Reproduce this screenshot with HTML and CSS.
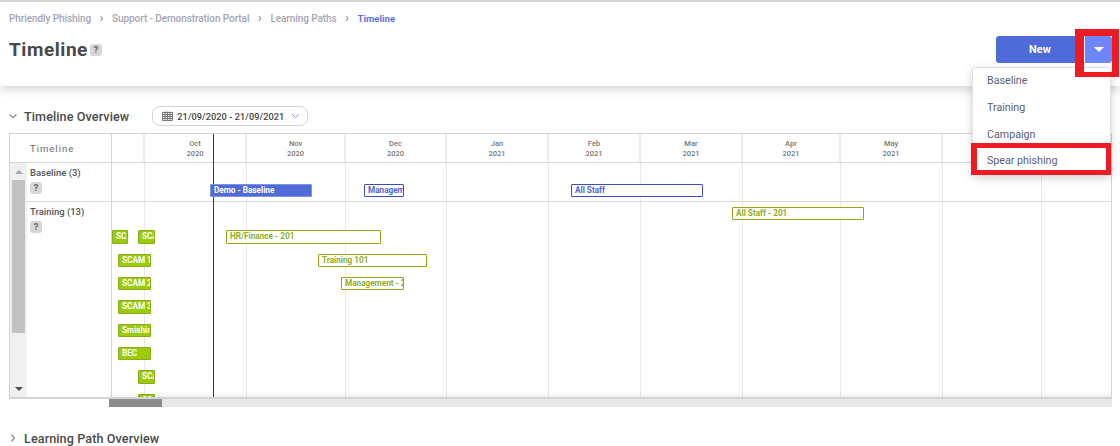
FILE: index.html
```html
<!DOCTYPE html>
<html lang="en">
<head>
<meta charset="utf-8">
<title>Timeline</title>
<link rel="stylesheet" href="styles.css">
</head>
<body>
<header class="top">
  <nav class="crumbs">
    <span>Phriendly Phishing</span><i class="sep">›</i>
    <span>Support - Demonstration Portal</span><i class="sep">›</i>
    <span>Learning Paths</span><i class="sep">›</i>
    <span class="current">Timeline</span>
  </nav>
  <div class="title-row">
    <h1>Timeline</h1><span class="help help-title">?</span>
    <div class="actions">
      <button class="btn-new">New</button>
      <button class="btn-caret" aria-label="More"><span class="caret"></span></button>
    </div>
  </div>
</header>

<section class="section-head first">
  <svg class="chev" width="10" height="10" viewBox="0 0 10 10"><path d="M1.5 3.5 5 6.5 8.5 3.5" fill="none" stroke="#8a8a8a" stroke-width="1.2"/></svg>
  <h2>Timeline Overview</h2>
  <div class="date-pill">
    <svg width="11" height="10" viewBox="0 0 11 10"><path d="M0.5 1.5h10v8h-10z M0.5 3.5h10 M0.5 5.5h10 M0.5 7.5h10 M3 .5v9 M5.5 .5v9 M8 .5v9" fill="none" stroke="#777" stroke-width="1"/></svg>
    <span>21/09/2020 - 21/09/2021</span>
    <svg class="pill-chev" width="9" height="6" viewBox="0 0 9 6"><path d="M1 1.2 4.5 4.5 8 1.2" fill="none" stroke="#8a97c8" stroke-width="1"/></svg>
  </div>
</section>

<div class="gantt">
  <div class="g-head">
    <div class="g-corner">Timeline</div>
    <div class="months head-months">
      <div class="m"></div>
      <div class="m"><b>Oct</b><b>2020</b></div>
      <div class="m"><b>Nov</b><b>2020</b></div>
      <div class="m"><b>Dec</b><b>2020</b></div>
      <div class="m"><b>Jan</b><b>2021</b></div>
      <div class="m"><b>Feb</b><b>2021</b></div>
      <div class="m"><b>Mar</b><b>2021</b></div>
      <div class="m"><b>Apr</b><b>2021</b></div>
      <div class="m"><b>May</b><b>2021</b></div>
      <div class="m"></div>
      <div class="m"></div>
      <div class="now now-head"></div>
    </div>
  </div>
  <div class="g-body">
    <div class="vscroll">
      <span class="arrow up"></span>
      <span class="thumb"></span>
      <span class="arrow down"></span>
    </div>
    <div class="labels">
      <div class="lab lab-base"><div class="lab-name">Baseline (3)</div><span class="help">?</span></div>
      <div class="lab"><div class="lab-name">Training (13)</div><span class="help">?</span></div>
    </div>
    <div class="canvas">
      <div class="months body-months">
        <div class="c"></div><div class="c"></div><div class="c"></div><div class="c"></div>
        <div class="c"></div><div class="c"></div><div class="c"></div><div class="c"></div>
        <div class="c"></div><div class="c"></div><div class="c"></div>
      </div>
      <div class="row-line"></div>
      <div class="now"></div>

      <div class="bar fill-blue" style="left:98px;top:21px;width:102px">Demo - Baseline</div>
      <div class="bar out-blue" style="left:252px;top:21px;width:40px">Management</div>
      <div class="bar out-blue" style="left:459px;top:21px;width:132px">All Staff</div>

      <div class="bar out-green" style="left:620px;top:44px;width:132px">All Staff - 201</div>
      <div class="bar fill-green tall" style="left:0;top:67px;width:16px">SCAM</div>
      <div class="bar fill-green tall" style="left:26px;top:67px;width:17px">SCAM</div>
      <div class="bar out-green tall" style="left:114px;top:67px;width:155px">HR/Finance - 201</div>
      <div class="bar fill-green" style="left:6px;top:91px;width:33px">SCAM 101</div>
      <div class="bar out-green" style="left:206px;top:91px;width:109px">Training 101</div>
      <div class="bar fill-green" style="left:6px;top:114px;width:33px">SCAM 201</div>
      <div class="bar out-green" style="left:229px;top:114px;width:63px">Management - 201</div>
      <div class="bar fill-green tall" style="left:6px;top:137px;width:33px">SCAM 301</div>
      <div class="bar fill-green" style="left:6px;top:161px;width:33px">Smishing</div>
      <div class="bar fill-green" style="left:6px;top:184px;width:33px">BEC</div>
      <div class="bar fill-green tall" style="left:26px;top:207px;width:17px">SCAM</div>
      <div class="bar fill-green tall" style="left:26px;top:231px;width:17px">SCAM</div>
      <div class="fade"></div>
    </div>
  </div>
</div>
<div class="hscroll"><span class="hthumb"></span></div>

<section class="section-head second">
  <svg class="chev" width="10" height="10" viewBox="0 0 10 10"><path d="M3.5 1.5 6.5 5 3.5 8.5" fill="none" stroke="#8a8a8a" stroke-width="1.2"/></svg>
  <h2>Learning Path Overview</h2>
</section>

<ul class="menu">
  <li>Baseline</li>
  <li>Training</li>
  <li>Campaign</li>
  <li>Spear phishing</li>
</ul>
<div class="mark mark-caret"></div>
<div class="mark mark-item"></div>
</body>
</html>
```
FILE: styles.css
```css
* { box-sizing: border-box; }
html, body { margin: 0; padding: 0; }
body {
  width: 1120px;
  height: 446px;
  overflow: hidden;
  position: relative;
  background: #fff;
  font-family: Roboto, "Liberation Sans", sans-serif;
  color: #444;
}

.top {
  height: 86px;
  border-top: 2px solid #d2d2d2;
  box-shadow: 0 3px 10px rgba(0, 0, 0, .18);
  padding: 10px 8px 0 9px;
  background: #fff;
}
.crumbs {
  display: flex;
  align-items: center;
  height: 12px;
  font-size: 10px;
  font-weight: 500;
  letter-spacing: -.08px;
  color: #a3a6b1;
}
.sep {
  width: 21px;
  text-align: center;
  font-style: normal;
  font-size: 12px;
  color: #888;
}
.current { color: #5a74e0; font-weight: 700; font-size: 9.6px; letter-spacing: 0; }
.title-row {
  display: flex;
  align-items: flex-start;
  margin-top: 13px;
}
h1 {
  margin: 0;
  font-size: 19px;
  line-height: 26px;
  font-weight: 700;
  letter-spacing: .55px;
  color: #484848;
}
.help {
  display: block;
  width: 12px;
  height: 12px;
  border-radius: 3px;
  background: #d6d6d6;
  color: #666;
  font-size: 9px;
  font-weight: 700;
  line-height: 12px;
  text-align: center;
}
.help-title { margin: 7px 0 0 2px; }
.actions {
  display: flex;
  margin-left: auto;
  margin-top: -1px;
  gap: 1px;
}
.actions button {
  border: 0;
  height: 27px;
  padding: 0;
  font-family: inherit;
  color: #fff;
}
.btn-new {
  width: 88px;
  background: #4f6bd8;
  border-radius: 3px 0 0 3px;
  font-size: 11px;
  font-weight: 700;
}
.btn-caret {
  width: 27px;
  background: #6d87fb;
  border-radius: 0 3px 3px 0;
  display: flex;
  align-items: center;
  justify-content: center;
}
.caret {
  width: 0;
  height: 0;
  border-left: 5px solid transparent;
  border-right: 5px solid transparent;
  border-top: 5px solid #fff;
}

.section-head {
  display: flex;
  align-items: center;
  padding-left: 8px;
}
.first { height: 20px; margin-top: 20px; }
.second { height: 14px; margin-top: 24px; }
.chev { flex: none; }
h2 {
  margin: 0 0 0 6px;
  font-size: 12.6px;
  font-weight: 500;
  letter-spacing: .1px;
  color: #4a4a4a;
}
.date-pill {
  display: flex;
  align-items: center;
  width: 156px;
  height: 20px;
  margin-left: 23px;
  padding-left: 9px;
  border: 1px solid #d4d4d4;
  border-radius: 8px;
  font-size: 9.2px;
  font-weight: 500;
  color: #444;
}
.date-pill span { margin-left: 4px; letter-spacing: .06px; }
.pill-chev { margin-left: 7px; }

.gantt {
  width: 1103px;
  height: 266px;
  margin: 7px 0 0 9px;
  border: 1px solid #d4d4d4;
  border-width: 1px 1px 2px 1px;
  display: flex;
  flex-direction: column;
}
.g-head {
  display: flex;
  height: 29px;
  flex: none;
  border-bottom: 1px solid #d8d8d8;
}
.g-corner {
  width: 102px;
  flex: none;
  border-right: 1px solid #d4d4d4;
  padding: 9px 0 0 20px;
  font-size: 9.5px;
  letter-spacing: 1px;
  color: #6a6a6a;
}
.months {
  flex: 1;
  display: grid;
  grid-template-columns: 33px 102px 99px 101px 102px 92px 102px 98px 102px 99px 1fr;
}
.head-months { position: relative; }
.m {
  border-right: 2px solid #ebebeb;
  text-align: center;
  padding-top: 5px;
}
.m:nth-child(11) { border-right: 0; }
.m b {
  display: block;
  font-weight: 500;
  font-size: 7.5px;
  line-height: 10px;
  color: #777;
}
.g-body {
  display: flex;
  flex: 1;
  min-height: 0;
}
.vscroll {
  width: 17px;
  flex: none;
  background: #f0f0f0;
  padding-left: 2px;
  display: flex;
  flex-direction: column;
  align-items: center;
}
.thumb {
  display: block;
  width: 13px;
  height: 153px;
  background: #c1c1c1;
  margin-left: -2px;
}
.arrow {
  display: block;
  width: 0;
  height: 0;
  margin-left: -2px;
  border-left: 4px solid transparent;
  border-right: 4px solid transparent;
}
.up { border-bottom: 4px solid #a8a8a8; margin-top: 7px; margin-bottom: 6px; }
.down { border-top: 4px solid #505050; margin-top: 54px; }
.labels {
  width: 85px;
  flex: none;
  border-right: 1px solid #d4d4d4;
}
.lab { padding: 4px 0 0 3px; }
.lab-base { height: 39px; border-bottom: 1px solid #d8d8d8; }
.lab-name {
  font-size: 9.5px;
  font-weight: 500;
  line-height: 12px;
  color: #555;
  margin-bottom: 3px;
}
.canvas {
  position: relative;
  flex: 1;
  overflow: hidden;
}
.body-months {
  position: absolute;
  inset: 0;
}
.c { border-right: 1px solid #e8e8e8; }
.c:last-child { border-right: 0; }
.row-line {
  position: absolute;
  left: 0;
  right: 0;
  top: 38px;
  height: 1px;
  background: #d8d8d8;
}
.now {
  position: absolute;
  left: 101px;
  top: 0;
  bottom: 0;
  width: 1px;
  background: #b80000;
}
.now-head { bottom: -1px; }
.bar {
  position: absolute;
  height: 13px;
  padding-left: 3px;
  border: 1px solid;
  border-radius: 1px;
  font-size: 8.2px;
  font-weight: 700;
  line-height: 10px;
  white-space: nowrap;
  overflow: hidden;
  background: #fff;
}
.tall { height: 14px; line-height: 11px; }
.fill-blue { background: #4f6bd8; border-color: #7d93ea; color: #fff; }
.out-blue { border-color: #3850b8; color: #5066cc; }
.fill-green { background: #9ccb0c; border-color: #8aab14; color: #fff; }
.out-green { border-color: #8aab14; color: #90ad2a; }
.fade {
  position: absolute;
  left: 0;
  right: 0;
  bottom: 0;
  height: 6px;
  background: linear-gradient(rgba(0, 0, 0, 0), rgba(0, 0, 0, .05));
}
.hscroll {
  width: 1003px;
  height: 8px;
  margin-left: 109px;
  background: #e8e8e8;
}
.hthumb {
  display: block;
  width: 53px;
  height: 8px;
  background: #8c8c8c;
}

.menu {
  position: absolute;
  left: 972px;
  top: 67px;
  width: 139px;
  height: 108px;
  margin: 0;
  padding: 0;
  list-style: none;
  background: #fff;
  border: 1px solid #e0e0e0;
  border-radius: 3px;
  box-shadow: 0 3px 10px rgba(0, 0, 0, .18);
  font-size: 10.7px;
  color: #5a6072;
}
.menu li {
  height: 27px;
  line-height: 25px;
  padding-left: 14px;
}
.menu li:last-child { line-height: 23px; }
.mark {
  position: absolute;
  border: solid #ed1c24;
}
.mark-caret {
  left: 1075px;
  top: 29px;
  width: 44px;
  height: 48px;
  border-width: 7px 7px 5px 9px;
}
.mark-item {
  left: 971px;
  top: 143px;
  width: 140px;
  height: 32px;
  border-width: 5px 5px 5px 6px;
}
```
